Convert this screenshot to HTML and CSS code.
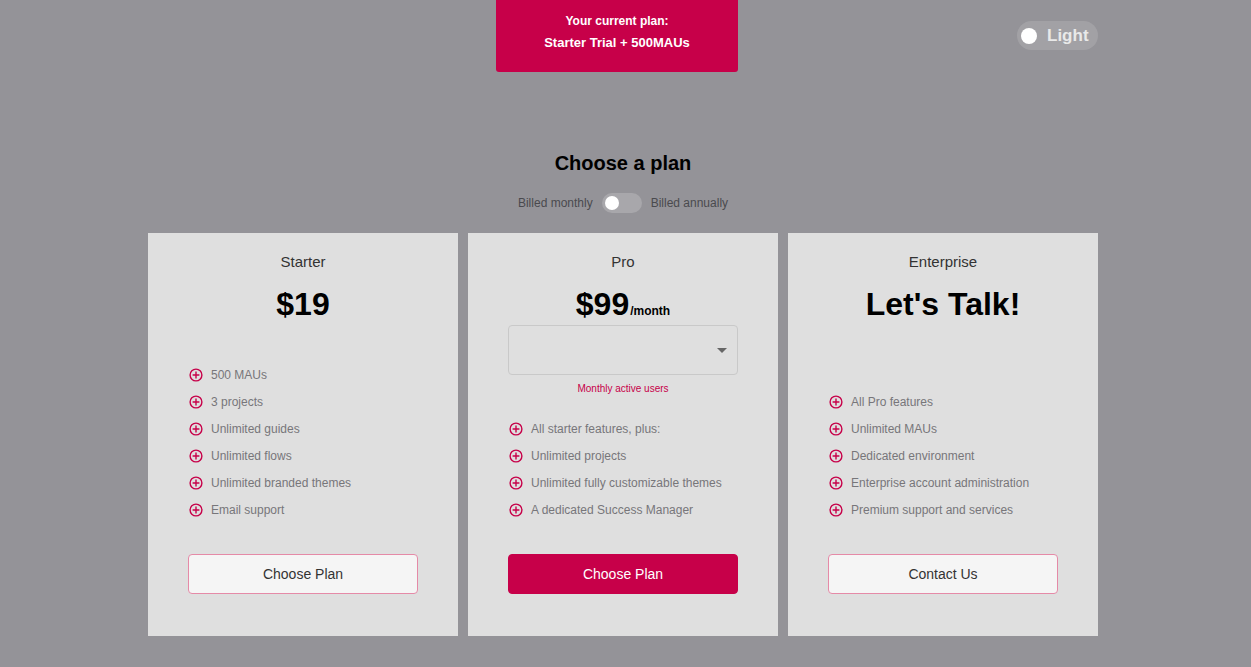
FILE: index.html
```html
<!DOCTYPE html>
<html lang="en">
<head>
<meta charset="utf-8">
<title>Choose a plan</title>
<link rel="stylesheet" href="styles.css">
</head>
<body>
<div class="page">
  <header class="topbar">
    <div class="current-plan">
      <div class="current-label">Your current plan:</div>
      <div class="current-name">Starter Trial + 500MAUs</div>
    </div>
    <div class="theme-toggle">
      <span class="theme-knob"></span>
      <span class="theme-label">Light</span>
    </div>
  </header>

  <section class="intro">
    <h1 class="title">Choose a plan</h1>
    <div class="billing">
      <span>Billed monthly</span>
      <span class="switch"><span class="switch-knob"></span></span>
      <span>Billed annually</span>
    </div>
  </section>

  <section class="cards">
    <article class="card">
      <div class="card-name">Starter</div>
      <div class="price">$19</div>
      <ul class="features">
        <li><svg class="ico" viewBox="0 0 14 14"><circle cx="7" cy="7" r="5.9"/><path d="M7 3.6v6.8M3.6 7h6.8"/></svg>500 MAUs</li>
        <li><svg class="ico" viewBox="0 0 14 14"><circle cx="7" cy="7" r="5.9"/><path d="M7 3.6v6.8M3.6 7h6.8"/></svg>3 projects</li>
        <li><svg class="ico" viewBox="0 0 14 14"><circle cx="7" cy="7" r="5.9"/><path d="M7 3.6v6.8M3.6 7h6.8"/></svg>Unlimited guides</li>
        <li><svg class="ico" viewBox="0 0 14 14"><circle cx="7" cy="7" r="5.9"/><path d="M7 3.6v6.8M3.6 7h6.8"/></svg>Unlimited flows</li>
        <li><svg class="ico" viewBox="0 0 14 14"><circle cx="7" cy="7" r="5.9"/><path d="M7 3.6v6.8M3.6 7h6.8"/></svg>Unlimited branded themes</li>
        <li><svg class="ico" viewBox="0 0 14 14"><circle cx="7" cy="7" r="5.9"/><path d="M7 3.6v6.8M3.6 7h6.8"/></svg>Email support</li>
      </ul>
      <button class="btn">Choose Plan</button>
    </article>

    <article class="card">
      <div class="card-name">Pro</div>
      <div class="price">$99<span class="per">/month</span></div>
      <div class="select"><span class="caret"></span></div>
      <div class="hint">Monthly active users</div>
      <ul class="features">
        <li><svg class="ico" viewBox="0 0 14 14"><circle cx="7" cy="7" r="5.9"/><path d="M7 3.6v6.8M3.6 7h6.8"/></svg>All starter features, plus:</li>
        <li><svg class="ico" viewBox="0 0 14 14"><circle cx="7" cy="7" r="5.9"/><path d="M7 3.6v6.8M3.6 7h6.8"/></svg>Unlimited projects</li>
        <li><svg class="ico" viewBox="0 0 14 14"><circle cx="7" cy="7" r="5.9"/><path d="M7 3.6v6.8M3.6 7h6.8"/></svg>Unlimited fully customizable themes</li>
        <li><svg class="ico" viewBox="0 0 14 14"><circle cx="7" cy="7" r="5.9"/><path d="M7 3.6v6.8M3.6 7h6.8"/></svg>A dedicated Success Manager</li>
      </ul>
      <button class="btn btn-primary">Choose Plan</button>
    </article>

    <article class="card">
      <div class="card-name">Enterprise</div>
      <div class="price">Let's Talk!</div>
      <ul class="features">
        <li><svg class="ico" viewBox="0 0 14 14"><circle cx="7" cy="7" r="5.9"/><path d="M7 3.6v6.8M3.6 7h6.8"/></svg>All Pro features</li>
        <li><svg class="ico" viewBox="0 0 14 14"><circle cx="7" cy="7" r="5.9"/><path d="M7 3.6v6.8M3.6 7h6.8"/></svg>Unlimited MAUs</li>
        <li><svg class="ico" viewBox="0 0 14 14"><circle cx="7" cy="7" r="5.9"/><path d="M7 3.6v6.8M3.6 7h6.8"/></svg>Dedicated environment</li>
        <li><svg class="ico" viewBox="0 0 14 14"><circle cx="7" cy="7" r="5.9"/><path d="M7 3.6v6.8M3.6 7h6.8"/></svg>Enterprise account administration</li>
        <li><svg class="ico" viewBox="0 0 14 14"><circle cx="7" cy="7" r="5.9"/><path d="M7 3.6v6.8M3.6 7h6.8"/></svg>Premium support and services</li>
      </ul>
      <button class="btn">Contact Us</button>
    </article>
  </section>
</div>
</body>
</html>
```

FILE: styles.css
```css
* { box-sizing: border-box; }

html, body {
  margin: 0;
  height: 100%;
}

body {
  background: #949398;
  font-family: "Liberation Sans", Arial, sans-serif;
  color: #000;
  overflow: hidden;
}

.page {
  width: 950px;
  margin-left: 148px;
}

.topbar {
  display: flex;
  align-items: flex-start;
}

.current-plan {
  margin-left: 348px;
  width: 242px;
  height: 72px;
  background: #c70049;
  border-radius: 0 0 3px 3px;
  color: #fff;
  font-weight: bold;
  text-align: center;
  padding-top: 14px;
}

.current-label {
  font-size: 12px;
  line-height: 14px;
}

.current-name {
  font-size: 13px;
  line-height: 15px;
  margin-top: 7px;
}

.theme-toggle {
  margin-left: auto;
  margin-top: 21px;
  width: 81px;
  height: 29px;
  border-radius: 15px;
  background: #a2a1a5;
  display: flex;
  align-items: center;
  padding-left: 4px;
  gap: 10px;
}

.theme-knob {
  width: 16px;
  height: 16px;
  border-radius: 50%;
  background: #fff;
}

.theme-label {
  font-size: 17px;
  font-weight: bold;
  color: #e9e9e9;
}

.intro {
  margin-top: 79px;
  text-align: center;
}

.title {
  margin: 0;
  font-size: 20px;
  line-height: 24px;
  font-weight: bold;
  color: #000;
}

.billing {
  margin-top: 18px;
  display: flex;
  justify-content: center;
  align-items: center;
  gap: 9px;
  font-size: 12px;
  color: #4a4a4e;
}

.switch {
  width: 40px;
  height: 20px;
  border-radius: 10px;
  background: #a8a7ab;
  display: flex;
  align-items: center;
  padding-left: 3px;
}

.switch-knob {
  width: 14px;
  height: 14px;
  border-radius: 50%;
  background: #fff;
}

.cards {
  margin-top: 20px;
  display: grid;
  grid-template-columns: repeat(3, 310px);
  gap: 10px;
}

.card {
  height: 403px;
  background: #dfdfdf;
  display: flex;
  flex-direction: column;
  align-items: center;
  padding: 20px 40px 42px;
}

.card-name {
  font-size: 15px;
  line-height: 18px;
  color: #333;
}

.price {
  margin-top: 16px;
  height: 34px;
  font-size: 32px;
  line-height: 34px;
  font-weight: bold;
  color: #000;
}

.per {
  font-size: 12px;
  line-height: 1;
  font-weight: bold;
  margin-left: 1px;
}

.select {
  margin-top: 4px;
  width: 230px;
  height: 50px;
  border: 1px solid #c9c9c9;
  border-radius: 4px;
  display: flex;
  justify-content: flex-end;
  align-items: center;
  padding-right: 10px;
}

.caret {
  width: 0;
  height: 0;
  border-left: 5px solid transparent;
  border-right: 5px solid transparent;
  border-top: 5px solid #666;
}

.hint {
  margin-top: 8px;
  font-size: 10px;
  line-height: 12px;
  color: #c70049;
}

.features {
  list-style: none;
  margin: auto 0 0;
  padding: 0;
  width: 100%;
}

.features li {
  display: flex;
  align-items: center;
  height: 27px;
  font-size: 12px;
  color: #77767a;
  padding-left: 1px;
}

.ico {
  width: 14px;
  height: 14px;
  margin-right: 8px;
  fill: none;
  stroke: #c70049;
  stroke-width: 1.4;
  flex: none;
}

.btn {
  margin-top: 31px;
  width: 230px;
  height: 40px;
  border: 1px solid #e58aa7;
  border-radius: 4px;
  background: #f5f5f5;
  font-family: inherit;
  font-size: 14px;
  color: #333;
  cursor: pointer;
}

.btn-primary {
  background: #c70049;
  border-color: #c70049;
  color: #fff;
}
```
